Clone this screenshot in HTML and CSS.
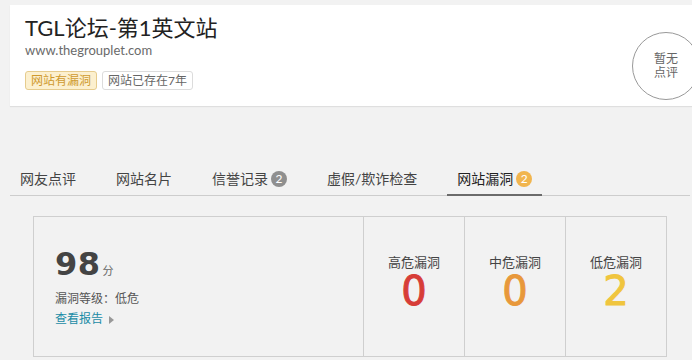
FILE: index.html
```html
<!DOCTYPE html>
<html lang="zh-CN">
<head>
<meta charset="utf-8">
<title>TGL论坛-第1英文站</title>
<link rel="stylesheet" href="styles.css">
</head>
<body>
<div class="page">
  <div class="card">
    <div class="info">
      <h1 class="title">TGL论坛-第1英文站</h1>
      <div class="url">www.thegrouplet.com</div>
      <div class="tags">
        <span class="tag tag-warn">网站有漏洞</span>
        <span class="tag">网站已存在7年</span>
      </div>
    </div>
    <div class="circle"><span>暂无<br>点评</span></div>
  </div>

  <div class="tabs">
    <div class="tab">网友点评</div>
    <div class="tab">网站名片</div>
    <div class="tab">信誉记录<span class="badge">2</span></div>
    <div class="tab">虚假/欺诈检查</div>
    <div class="tab active">网站漏洞<span class="badge badge-orange">2</span></div>
  </div>

  <div class="vuln">
    <div class="score-col">
      <div class="score"><span class="num">98</span><span class="unit">分</span></div>
      <div class="level">漏洞等级：低危</div>
      <a class="report" href="#">查看报告</a><span class="arrow"></span>
    </div>
    <div class="stat">
      <div class="label">高危漏洞</div>
      <div class="count red">0</div>
    </div>
    <div class="stat">
      <div class="label">中危漏洞</div>
      <div class="count orange">0</div>
    </div>
    <div class="stat">
      <div class="label">低危漏洞</div>
      <div class="count yellow">2</div>
    </div>
  </div>
</div>
</body>
</html>
```
FILE: styles.css
```css
html, body {
  margin: 0;
  padding: 0;
  overflow: hidden;
}
body {
  background: #f2f2f2;
  font-family: Lato, "Noto Sans CJK SC", sans-serif;
  color: #333;
}
.page {
  width: 680px;
  padding: 5px 0 0 10px;
}
.card {
  background: #fff;
  width: 700px;
  height: 101px;
  box-sizing: border-box;
  padding: 9px 0 0 15px;
  display: flex;
  justify-content: space-between;
  align-items: flex-start;
  box-shadow: 0 1px 1px rgba(0, 0, 0, 0.08);
}
.title {
  margin: 0;
  font-size: 22px;
  line-height: 28px;
  font-weight: normal;
  color: #222;
}
.url {
  font-size: 13px;
  line-height: 16px;
  color: #6a6a6a;
  margin-top: 0;
}
.tags {
  display: flex;
  gap: 5px;
  margin-top: 13px;
}
.tag {
  font-size: 12px;
  line-height: 17px;
  padding: 0 5px;
  border: 1px solid #dcdcdc;
  border-radius: 3px;
  color: #666;
  background: #fff;
}
.tag-warn {
  background: #fcf0cf;
  border-color: #e6cc8e;
  color: #cf9a2e;
}
.circle {
  width: 66px;
  height: 66px;
  border: 1px solid #999;
  border-radius: 50%;
  margin: 18px 10px 0 0;
  display: flex;
  align-items: center;
  justify-content: center;
  font-size: 12px;
  line-height: 14px;
  color: #666;
  text-align: center;
}
.tabs {
  display: flex;
  gap: 20px;
  margin-top: 62px;
  border-bottom: 1px solid #cdcdcd;
}
.tab {
  font-size: 14px;
  line-height: 20px;
  padding: 1px 10px 5px;
  border-bottom: 2px solid transparent;
  margin-bottom: -1px;
  color: #444;
  display: flex;
  align-items: center;
}
.tab.active {
  border-bottom-color: #6b6b6b;
  color: #222;
}
.badge {
  display: inline-block;
  width: 16px;
  height: 16px;
  line-height: 16px;
  border-radius: 50%;
  background: #8f8f8f;
  color: #fff;
  font-size: 12px;
  text-align: center;
  margin-left: 3px;
}
.badge-orange {
  background: #f1b54e;
}
.vuln {
  margin: 20px 0 0 23px;
  width: 634px;
  height: 141px;
  box-sizing: border-box;
  border: 1px solid #cfcfcf;
  display: grid;
  grid-template-columns: 329px 101px 101px 101px;
}
.score-col {
  padding: 31px 0 0 21px;
}
.score {
  line-height: 32px;
  height: 32px;
}
.num {
  font-family: "DejaVu Sans", sans-serif;
  font-weight: bold;
  font-size: 32px;
  letter-spacing: 0.5px;
  color: #444;
}
.unit {
  font-size: 11px;
  color: #666;
  margin-left: 2px;
}
.level {
  margin-top: 11px;
  font-size: 12px;
  line-height: 16px;
  color: #555;
}
.report {
  font-size: 12px;
  line-height: 16px;
  color: #1a8ca6;
  text-decoration: none;
}
.arrow {
  display: inline-block;
  width: 0;
  height: 0;
  border-left: 5px solid #999;
  border-top: 4px solid transparent;
  border-bottom: 4px solid transparent;
  margin-left: 6px;
  vertical-align: -1px;
}
.stat {
  border-left: 1px solid #cfcfcf;
  text-align: center;
  padding-top: 36px;
}
.label {
  font-size: 13px;
  line-height: 18px;
  color: #444;
}
.count {
  font-family: "DejaVu Sans", sans-serif;
  font-weight: normal;
  font-size: 40px;
  line-height: 40px;
  -webkit-text-stroke: 1px currentColor;
}
.red { color: #d73d38; }
.orange { color: #e8983b; }
.yellow { color: #f0c53e; }
```
